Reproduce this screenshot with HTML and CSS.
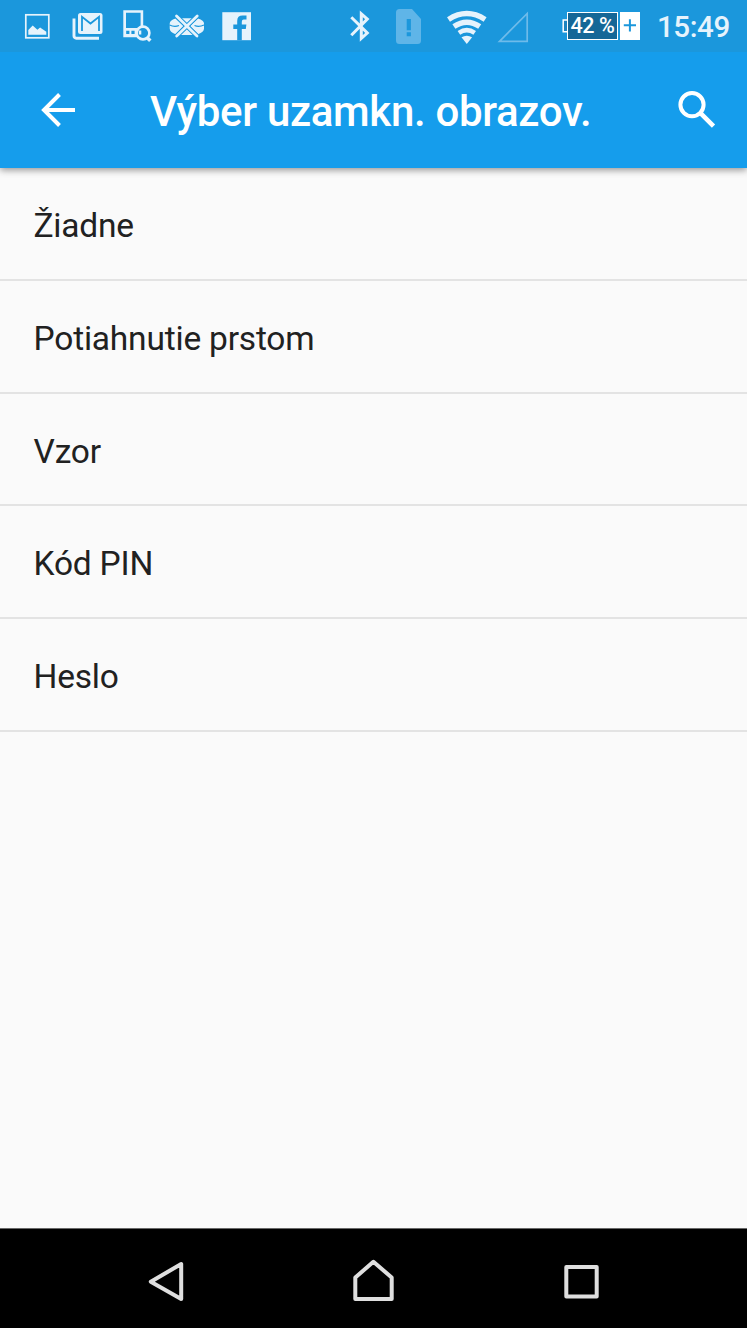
FILE: index.html
```html
<!DOCTYPE html>
<html lang="sk">
<head>
<meta charset="utf-8">
<title>Výber uzamkn. obrazov.</title>
<link rel="stylesheet" href="styles.css">
</head>
<body>
<div class="screen">
  <header class="status">
    <div class="notifications">
      <svg width="50" height="52" viewBox="12 0 50 52">
        <rect x="25.8" y="14.8" width="23" height="23" fill="none" stroke="#e6f3fc" stroke-width="1.7"/>
        <path d="M28.3 34.8V30l4.4-4.5 4.7 4.3 2.7-2.2 6.2 4.2v3z" fill="#e6f3fc"/>
      </svg>
      <svg width="50" height="52" viewBox="62 0 50 52">
        <path d="M74 18.5V36a2.2 2.2 0 0 0 2.2 2.2H99" fill="none" stroke="#e6f3fc" stroke-width="2.9"/>
        <rect x="78" y="13" width="24.5" height="21" rx="2.5" fill="#e6f3fc"/>
        <path d="M82 31V16.800l8.500 6.700 8.500-6.700V31" fill="none" stroke="#1b97dc" stroke-width="1.800"/>
      </svg>
      <svg width="50" height="52" viewBox="112 0 50 52">
        <path d="M123.300 10.200h19.900v27h-19.900zM126 12.800v15.300h14.600v-15.300z" fill="#e6f3fc" fill-rule="evenodd"/>
        <path d="M126.200 30.800h3.200v3.200h-3.200zM131.400 30.800h3.200v3.200h-3.200z" fill="#1b97dc"/>
        <circle cx="143" cy="33" r="6.400" fill="#1b97dc" stroke="#e6f3fc" stroke-width="2.600"/>
        <path d="M138.800 30.500h2.500v4h-2.500z" fill="#e6f3fc"/>
        <path d="M147 37.500l3.300 3.300" stroke="#e6f3fc" stroke-width="3.500"/>
      </svg>
      <svg width="50" height="52" viewBox="162 0 50 52">
        <path d="M179 18.200h15.500l-7.700 7zM179 35h15.500l-7.700-8zM175.500 18.500l8 7.500-8 8.200q-5.800-2-5.800-5.700v-5q0-3 5.800-5zM198 18.500l-8 7.500 8 8.200q6-2 6-5.700v-5q0-3-6-5z" fill="#e6f3fc"/>
        <path d="M169.500 25q5 2.300 9.500.5M204 25q-5 2.300-9.500.5" fill="none" stroke="#1b97dc" stroke-width="1.200"/>
        <path d="M176.500 16l20.500 20M197.200 16l-20.500 20" stroke="#1b97dc" stroke-width="4.600"/>
        <path d="M176.500 16l20.500 20M197.200 16l-20.500 20" stroke="#e6f3fc" stroke-width="2.800" stroke-linecap="round"/>
      </svg>
      <svg width="50" height="52" viewBox="212 0 50 52">
        <path d="M222.300 12.200H251v28H222.300z" fill="#e6f3fc"/>
        <path d="M246.500 15.500v4h-2.700q-2 0-2 2.200v2.800h4.600l-.6 4.400h-4V40.200h-4.600V28.900h-3.900v-4.400h3.900v-3.600q0-5.400 5.400-5.400z" fill="#1b97dc"/>
      </svg>
    </div>
    <div class="system">
      <svg width="40" height="52" viewBox="340 0 40 52">
        <path d="M351.300 17.300l16 15.700-6 5.400V13.800l6 5.200-16 16.200" fill="none" stroke="#e6f3fc" stroke-width="3"/>
      </svg>
      <svg width="50" height="52" viewBox="380 0 50 52">
        <path d="M399.500 9H412l9 10v21.500a3.500 3.500 0 0 1-3.500 3.500h-18a3.500 3.500 0 0 1-3.500-3.500v-28a3.500 3.500 0 0 1 3.500-3.500z" fill="#5fb5e8"/>
        <path d="M406.700 19h4.200v11.200h-4.200zM406.700 32.200h4.200v4h-4.200z" fill="#1b97dc"/>
      </svg>
      <svg width="65" height="52" viewBox="430 0 65 52">
        <g fill="none" stroke="#e6f3fc" stroke-width="5.400">
          <path d="M448.500 19.400q18.300-11.800 36.600 0"/>
          <path d="M453.900 26.600q12.900-8.600 25.800 0"/>
          <path d="M458.900 32.800q7.900-5.400 15.800 0" stroke-width="4.600"/>
        </g>
        <path d="M461.500 37.300q5.300-3.100 10.600 0L466.800 44z" fill="#e6f3fc"/>
      </svg>
      <svg width="67" height="52" viewBox="495 0 67 52">
        <path d="M499.500 41.300H527.200V13.500z" fill="none" stroke="#6ebbea" stroke-width="1.700"/>
      </svg>
      <div class="battery">
        <svg width="6" height="27" viewBox="562 12 6 27"><path d="M568.500 20H563.200v11.700h5.300" fill="#1b83c0" stroke="#fff" stroke-width="1.500"/></svg>
        <span class="level">42 %</span>
        <svg class="plus" width="20" height="28" viewBox="620 12 20 28"><path d="M620 12h20v28h-20z" fill="#fff"/><path d="M623.800 25.300h12.200M629.900 19.200v12.200" stroke="#1b97dc" stroke-width="2"/></svg>
      </div>
      <span class="clock">15:49</span>
    </div>
  </header>
  <div class="appbar">
    <svg class="back" width="36" height="36" viewBox="40 92 36 36"><path d="M75 110H44M59.500 94.500L44 110l15.500 15.500" fill="none" stroke="#fff" stroke-width="4"/></svg>
    <h1 class="title">Výber uzamkn. obrazov.</h1>
    <svg class="search" width="40" height="40" viewBox="677 90 40 40"><circle cx="692" cy="104.700" r="11.600" fill="none" stroke="#fff" stroke-width="4"/><path d="M700.500 113.200l13 13" stroke="#fff" stroke-width="4.600"/></svg>
  </div>
  <ul class="options">
    <li class="option">Žiadne</li>
    <li class="option">Potiahnutie prstom</li>
    <li class="option">Vzor</li>
    <li class="option">Kód PIN</li>
    <li class="option">Heslo</li>
  </ul>
  <nav class="navbar">
    <svg width="747" height="99" viewBox="0 1229 747 99">
      <g fill="none" stroke="#dfdfdf" stroke-width="4" stroke-linejoin="round">
        <path d="M150.800 1281.700L181.200 1264v35z"/>
        <path d="M355.300 1299V1277.500L373.400 1261.800l18.300 15.700V1299z"/>
        <path d="M566.300 1267H596.700v29.500H566.300z"/>
      </g>
    </svg>
  </nav>
</div>
</body>
</html>
```
FILE: styles.css
```css
body {
  margin: 0;
  background: #fafafa;
  font-family: Roboto, "Noto Sans", sans-serif;
}
.screen {
  display: flex;
  flex-direction: column;
  width: 747px;
  height: 1328px;
  overflow: hidden;
}
svg { display: block; flex: none; }
.status {
  display: flex;
  position: relative;
  z-index: 1;
  justify-content: space-between;
  height: 52px;
  background: #1b97dc;
}
.notifications { display: flex; padding-left: 12px; }
.system { display: flex; width: 407px; }
.battery {
  display: flex;
  width: 78px;
  height: 28px;
  margin-top: 12px;
}
.level {
  box-sizing: border-box;
  width: 51px;
  height: 28px;
  margin-left: -1px;
  border: 1px solid #fff;
  background: #156797;
  color: #fff;
  font-size: 21.5px;
  font-weight: 500;
  letter-spacing: -0.4px;
  line-height: 26px;
  text-align: center;
  white-space: nowrap;
}
.plus { margin-left: 2px; }
.clock {
  margin-left: 17px;
  color: #e6f3fc;
  font-size: 29.5px;
  font-weight: 500;
  letter-spacing: -0.4px;
  line-height: 55px;
}
.appbar {
  display: flex;
  position: relative;
  height: 116px;
  background: #159dec;
  box-shadow: 0 2px 7px rgba(0, 0, 0, 0.42);
}
.back { margin: 40px 0 0 40px; }
.title {
  width: 527px;
  margin: 0 0 0 74px;
  color: #fff;
  font-size: 42px;
  font-weight: 500;
  letter-spacing: -0.32px;
  line-height: 120px;
  white-space: nowrap;
}
.search { margin-top: 38px; }
.options {
  flex: 1;
  margin: 0;
  padding: 0;
  list-style: none;
}
.option {
  box-sizing: border-box;
  height: 112.8px;
  padding-left: 33.5px;
  border-bottom: 2px solid #e3e3e3;
  color: #212121;
  font-size: 33.5px;
  letter-spacing: -0.2px;
  line-height: 115px;
}
.navbar {
  border-top: 1px solid #686868;
  background: #000;
}
```
